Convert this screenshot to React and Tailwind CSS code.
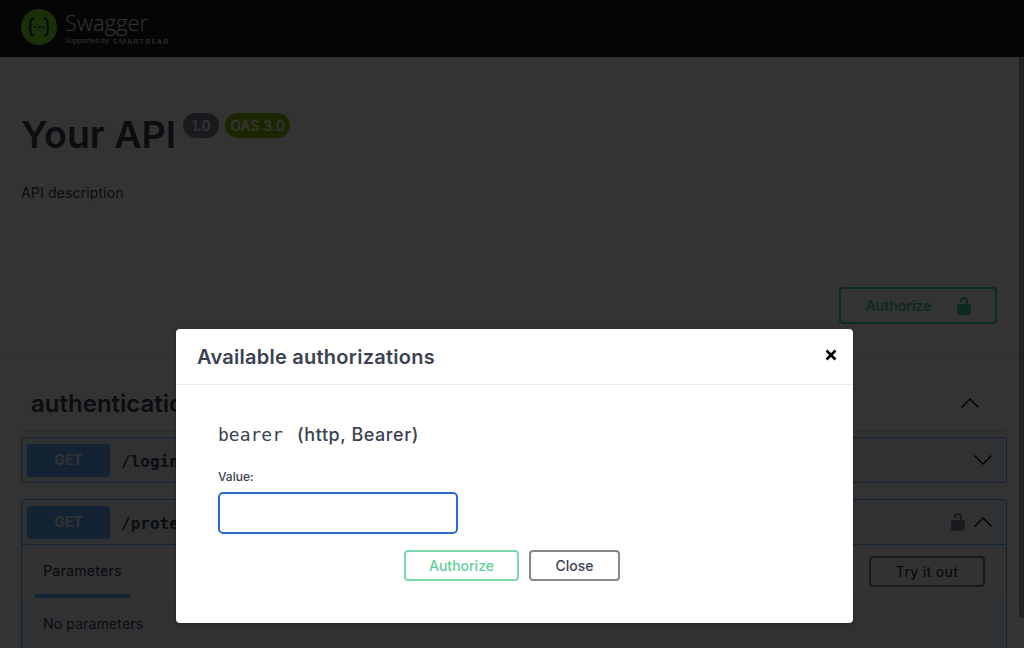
import React from 'react';

const sans = { fontFamily: 'Inter, "Liberation Sans", sans-serif' };
const mono = { fontFamily: '"DejaVu Sans Mono", monospace' };

function LockIcon({ className }) {
  return (
    <svg viewBox="0 0 20 20" className={className} fill="currentColor">
      <path d="M15.8 8H14V5.6C14 2.703 12.665 1 10 1 7.334 1 6 2.703 6 5.6V6h2v-.801C8 3.754 8.797 3 10 3c1.203 0 2 .754 2 2.199V8H4c-.553 0-1 .646-1 1.199V17c0 .549.428 1.139.951 1.307l1.197.387C5.672 18.861 6.55 19 7.1 19h5.8c.549 0 1.428-.139 1.951-.307l1.196-.387c.524-.167.953-.757.953-1.306V9.199C17 8.646 16.352 8 15.8 8z" />
    </svg>
  );
}

function Arrow({ up, className }) {
  return (
    <svg viewBox="0 0 20 12" className={`h-[12px] w-[20px] ${className}`} fill="none" stroke="#000" strokeWidth="1.400">
      <path d={up ? 'M1.500 10.500 10 2l8.500 8.500' : 'M1.500 1.500 10 10l8.500-8.500'} />
    </svg>
  );
}

function GetBadge() {
  return (
    <span className="flex h-[33px] w-[83px] items-center justify-center rounded-[3px] bg-[#61affe] text-sm font-semibold text-white">
      GET
    </span>
  );
}

export default function App() {
  return (
    <div className="relative h-[648px] w-[1024px] overflow-hidden bg-white" style={sans}>
      {/* page behind the dialog */}
      <header className="flex h-[57px] items-center bg-[#1b1b1b] pb-[3px] pl-[21px]">
        <svg viewBox="0 0 36 36" className="h-9 w-9">
          <circle cx="18" cy="18" r="18" fill="#85ea2d" />
          <path d="M13 9.500c-3 0-3.500 1.500-3.500 3.500v3c0 1.500-.8 2-2 2 1.200 0 2 .5 2 2v3c0 2 .5 3.500 3.500 3.500M23 9.500c3 0 3.500 1.500 3.500 3.500v3c0 1.500.8 2 2 2-1.200 0-2 .5-2 2v3c0 2-.5 3.500-3.500 3.500" fill="none" stroke="#173647" strokeWidth="2" />
          <circle cx="14" cy="18" r="1.100" fill="#173647" />
          <circle cx="18" cy="18" r="1.100" fill="#173647" />
          <circle cx="22" cy="18" r="1.100" fill="#173647" />
        </svg>
        <div className="ml-2 flex flex-col text-white" style={{ fontFamily: '"Open Sans", sans-serif' }}>
          <span className="text-[22px] leading-[24px] font-light">Swagger</span>
          <span className="mt-[3px] flex items-center gap-1 text-[7px] leading-[8px]">
            Supported by <span className="text-[8px] tracking-[1.200px]">SMARTBEAR</span>
          </span>
        </div>
      </header>

      <section className="h-[299px] border-b border-[#e5e5e5] px-[21px] pt-[53px] text-[#3b4151]">
        <div className="flex items-start">
          <h1 className="text-[37.500px] leading-[50px] font-semibold">Your API</h1>
          <span className="mt-[3px] ml-[7px] flex h-[25px] w-[36px] items-center justify-center rounded-full bg-[#7d8492] text-sm font-semibold text-white">1.0</span>
          <span className="mt-[3px] ml-[6px] flex h-[25px] w-[65px] items-center justify-center rounded-full bg-[#89bf04] text-sm font-semibold text-white">OAS 3.0</span>
        </div>
        <p className="mt-[23px] text-sm tracking-[0.150px]">API description</p>
        <div className="mt-[84px] flex justify-end pr-[6px]">
          <button className="flex h-[37px] w-[158px] items-center justify-center gap-[22px] rounded border-2 border-[#49cc90] pl-[3px] text-sm font-semibold text-[#49cc90]">
            Authorize
            <LockIcon className="h-5 w-5" />
          </button>
        </div>
      </section>

      <section className="pt-[27px] pr-[17px] pl-[21px] text-[#3b4151]">
        <div className="flex h-[49px] items-start justify-between border-b border-[#d9dadd] pr-[27px] pl-[10px]">
          <h2 className="text-2xl leading-[42px] font-semibold">authentication</h2>
          <Arrow up className="mt-[14px]" />
        </div>
        <div className="mt-[5px] flex h-[46px] items-center rounded border border-[#61affe] bg-[#ebf3fb] px-[5px]">
          <GetBadge />
          <span className="ml-[11px] pt-[3px] text-base font-bold" style={mono}>/login</span>
          <Arrow className="mr-[8px] ml-auto" />
        </div>
        <div className="mt-[16px] h-[200px] rounded border border-[#61affe] bg-[#ebf3fb]">
          <div className="flex h-[45px] items-center border-b border-[#61affe] px-[5px]">
            <GetBadge />
            <span className="ml-[11px] pt-[3px] text-base font-bold" style={mono}>/protected</span>
            <LockIcon className="mr-[5px] ml-auto h-5 w-5 text-[#7d8492]" />
            <Arrow up className="mr-[8px]" />
          </div>
          <div className="flex h-[53px] items-center justify-between bg-[#f7fafd] pr-[21px] pl-[13px]">
            <span className="flex h-full w-[95px] items-center justify-center border-b-[4px] border-[#61affe] pt-[2px] text-sm font-medium tracking-[0.200px]">Parameters</span>
            <button className="h-[31px] w-[116px] rounded border-2 border-[#7d8492] text-sm font-medium tracking-[0.300px]">Try it out</button>
          </div>
          <p className="px-[21px] pt-[16px] text-sm tracking-[0.150px]">No parameters</p>
        </div>
      </section>

      {/* dialog */}
      <div className="absolute inset-0 bg-black/80" />
      <div className="absolute top-[57px] right-0 bottom-[30px] w-[5px] rounded-bl bg-[#202020]" />
      <div className="absolute top-[329px] left-[176px] h-[294px] w-[677px] rounded bg-white text-[#3b4151] shadow-[0_1px_3px_rgba(0,0,0,.3)]">
        <div className="flex h-[56px] items-center justify-between border-b border-[#ebebeb] pr-[16px] pl-[21px]">
          <h3 className="text-[20px] font-semibold tracking-[0.250px]">Available authorizations</h3>
          <svg viewBox="0 0 12 12" className="mb-[4px] h-3 w-3" stroke="#000" strokeWidth="2.600">
            <path d="M1.500 1.500l9 9M10.500 1.500l-9 9" />
          </svg>
        </div>
        <div className="pt-[37px] pl-[42px]">
          <h4 className="flex items-center text-[18px] leading-[26px] font-medium">
            <code className="font-normal" style={mono}>bearer</code>
            <span className="ml-[14px] tracking-[0.550px]">(http, Bearer)</span>
          </h4>
          <label className="mt-[21px] block text-xs font-medium">Value:</label>
          <input className="mt-[7px] block h-[42px] w-[240px] rounded-[5px] border-2 border-[#2d6bcf] bg-white outline-none" />
          <div className="mt-[16px] ml-[186px] flex gap-[10px]">
            <button className="h-[31px] w-[115px] rounded border-2 border-[#7dd8ae] text-sm font-medium text-[#5fcf9b]">Authorize</button>
            <button className="h-[31px] w-[91px] rounded border-2 border-[#888888] text-sm font-medium">Close</button>
          </div>
        </div>
      </div>
    </div>
  );
}
